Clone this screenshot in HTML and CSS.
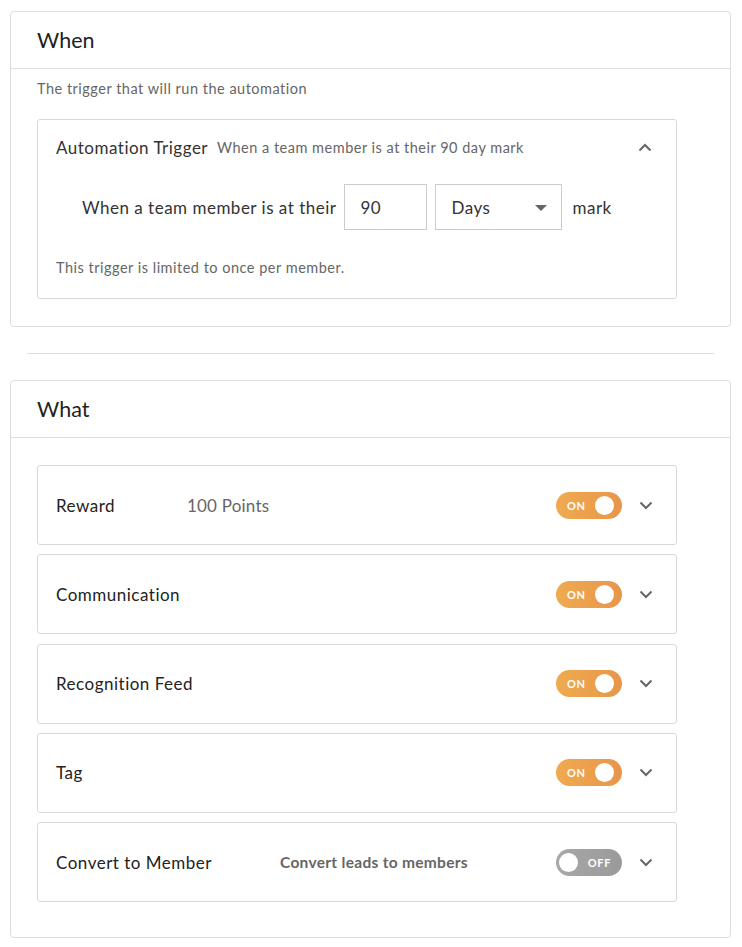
FILE: index.html
```html
<!DOCTYPE html>
<html lang="en">
<head>
<meta charset="utf-8">
<title>Automation</title>
<link rel="stylesheet" href="styles.css">
</head>
<body>
<div class="page">
  <section class="card">
    <header class="card-head">When</header>
    <div class="card-body when-body">
      <p class="hint">The trigger that will run the automation</p>
      <div class="panel trigger">
        <div class="trigger-head">
          <span class="trigger-title">Automation Trigger</span>
          <span class="trigger-sub">When a team member is at their 90 day mark</span>
          <svg class="chev" width="14" height="9" viewBox="0 0 14 9"><path d="M1.5 7.5 L7 2 L12.5 7.5" fill="none" stroke="#666" stroke-width="2"/></svg>
        </div>
        <div class="trigger-row">
          <span>When a team member is at their</span>
          <div class="field num">90</div>
          <div class="field select">Days<span class="caret"></span></div>
          <span>mark</span>
        </div>
        <p class="note">This trigger is limited to once per member.</p>
      </div>
    </div>
  </section>

  <hr class="divider">

  <section class="card">
    <header class="card-head">What</header>
    <div class="card-body what-body">
      <div class="panel row">
        <span class="row-title">Reward</span>
        <span class="row-detail reward">100 Points</span>
        <span class="toggle on"><span class="lbl">ON</span><span class="knob"></span></span>
        <svg class="chev" width="14" height="9" viewBox="0 0 14 9"><path d="M1.5 1.5 L7 7 L12.5 1.5" fill="none" stroke="#666" stroke-width="2"/></svg>
      </div>
      <div class="panel row">
        <span class="row-title">Communication</span>
        <span class="row-detail"></span>
        <span class="toggle on"><span class="lbl">ON</span><span class="knob"></span></span>
        <svg class="chev" width="14" height="9" viewBox="0 0 14 9"><path d="M1.5 1.5 L7 7 L12.5 1.5" fill="none" stroke="#666" stroke-width="2"/></svg>
      </div>
      <div class="panel row">
        <span class="row-title">Recognition Feed</span>
        <span class="row-detail"></span>
        <span class="toggle on"><span class="lbl">ON</span><span class="knob"></span></span>
        <svg class="chev" width="14" height="9" viewBox="0 0 14 9"><path d="M1.5 1.5 L7 7 L12.5 1.5" fill="none" stroke="#666" stroke-width="2"/></svg>
      </div>
      <div class="panel row">
        <span class="row-title">Tag</span>
        <span class="row-detail"></span>
        <span class="toggle on"><span class="lbl">ON</span><span class="knob"></span></span>
        <svg class="chev" width="14" height="9" viewBox="0 0 14 9"><path d="M1.5 1.5 L7 7 L12.5 1.5" fill="none" stroke="#666" stroke-width="2"/></svg>
      </div>
      <div class="panel row">
        <span class="row-title">Convert to Member</span>
        <span class="row-detail convert">Convert leads to members</span>
        <span class="toggle off"><span class="knob"></span><span class="lbl">OFF</span></span>
        <svg class="chev" width="14" height="9" viewBox="0 0 14 9"><path d="M1.5 1.5 L7 7 L12.5 1.5" fill="none" stroke="#666" stroke-width="2"/></svg>
      </div>
    </div>
  </section>
</div>
</body>
</html>
```

FILE: styles.css
```css
* { box-sizing: border-box; }

body {
  margin: 0;
  background: #fff;
  font-family: Lato, "Open Sans", sans-serif;
  color: #333;
  letter-spacing: 0.5px;
}

.page {
  padding: 11px 11px 0 10px;
}

.card {
  border: 1px solid #ddd;
  border-radius: 4px;
  background: #fff;
}

.card-head {
  height: 57px;
  padding: 0 26px;
  display: flex;
  align-items: center;
  font-size: 21.5px;
  letter-spacing: 0;
  color: #222;
  border-bottom: 1px solid #ddd;
}

.card-body {
  padding: 0 53px 27px 26px;
}

.hint {
  margin: 0 0 21px 0;
  padding-top: 11px;
  line-height: 18px;
  font-size: 14.5px;
  color: #666;
}

.panel {
  border: 1px solid #d9d9d9;
  border-radius: 3px;
  background: #fff;
}

.trigger {
  padding: 0 18px;
}

.trigger-head {
  height: 55px;
  display: flex;
  align-items: center;
}

.trigger-title {
  font-size: 17px;
  color: #333;
}

.trigger-sub {
  margin-left: 9px;
  font-size: 14.5px;
  color: #666;
}

.trigger-head .chev {
  margin-left: auto;
  margin-right: 6px;
}

.trigger-row {
  display: flex;
  align-items: center;
  gap: 8px;
  padding-left: 26px;
  margin-top: 9px;
  font-size: 17px;
  color: #333;
}

.field {
  height: 46px;
  border: 1px solid #ccc;
  display: flex;
  align-items: center;
  font-size: 17px;
  color: #333;
  padding-left: 15px;
}

.field.num { width: 83px; }

.field.select {
  width: 127px;
  position: relative;
  margin-right: 2px;
}

.caret {
  position: absolute;
  right: 14px;
  top: 20px;
  width: 0;
  height: 0;
  border-left: 6px solid transparent;
  border-right: 6px solid transparent;
  border-top: 6px solid #666;
}

.note {
  margin: 0;
  padding: 29px 0 21px 0;
  line-height: 18px;
  font-size: 14.5px;
  color: #666;
}

.divider {
  margin: 26px 17px 26px 17px;
  border: 0;
  border-top: 1px solid #ddd;
  height: 0;
}

.what-body {
  padding-top: 27px;
  padding-bottom: 35px;
  display: flex;
  flex-direction: column;
  gap: 9.25px;
}

.row {
  height: 80px;
  display: flex;
  align-items: center;
  padding: 0 23px 0 18px;
}

.row-title {
  font-size: 17px;
  color: #222;
  min-width: 131px;
  white-space: nowrap;
  flex: none;
}

.row:last-child .row-title { min-width: 224px; }

.row-detail {
  flex: 1;
  font-size: 17px;
  letter-spacing: 0.2px;
  color: #666;
  white-space: nowrap;
}

.row-detail.convert {
  font-size: 15.5px;
  font-weight: 700;
  letter-spacing: 0.3px;
  color: #666;
}

.toggle {
  width: 66px;
  height: 27px;
  border-radius: 13.5px;
  display: flex;
  align-items: center;
  justify-content: space-between;
  margin-right: 17px;
  flex: none;
}

.toggle.on {
  background: linear-gradient(90deg, #efaa50, #e8964a);
  padding: 0 8px 0 11px;
}

.toggle.off {
  background: linear-gradient(90deg, #a8a8a8, #9a9a9a);
  padding: 0 11px 0 3px;
}

.lbl {
  font-size: 11px;
  font-weight: 700;
  letter-spacing: 0.6px;
  color: #fff;
}

.knob {
  width: 19px;
  height: 19px;
  border-radius: 50%;
  background: #fff;
}

.chev { flex: none; display: block; }
```
